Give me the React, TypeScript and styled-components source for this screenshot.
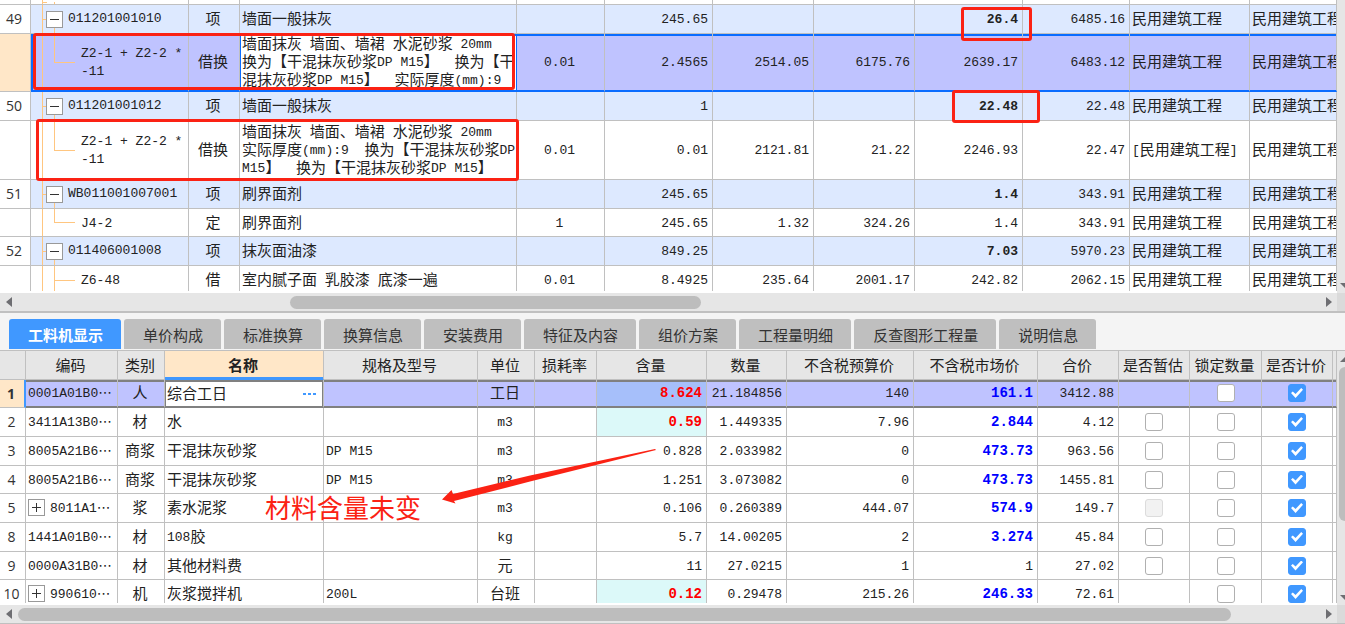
import React from 'react';
import styled, { createGlobalStyle, css } from 'styled-components';

const GlobalStyle = createGlobalStyle`
  *, *::before, *::after { box-sizing: border-box; }
  html, body { margin: 0; height: 100%; overflow: hidden; }
  body {
    background: #f4f4f4;
    color: #222;
    font-family: "Noto Sans CJK SC", sans-serif;
    font-size: 15px;
    font-weight: 400;
    text-spacing-trim: space-all;
  }
  #root { height: 100%; }
`;

const LINE = '#c0c0c0';
const BLUE = '#0a6cff';
const ACCENT = '#4098ff';
const SELECTED = '#bfc3ff';
const PEACH = '#ffe7c8';
const RED = '#fb2214';
const GUIDE = '#ffc680';

const Window = styled.main`
  position: relative;
  display: flex;
  flex-direction: column;
  height: 100vh;
  overflow: hidden;
`;

const Pane = styled.section<{ $grow?: boolean }>`
  display: grid;
  grid-template-columns: minmax(0, 1fr) 8px;
  grid-template-rows: minmax(0, 1fr) 18px;
  height: ${p => (p.$grow ? 'auto' : '311px')};
  flex: ${p => (p.$grow ? '1 1 0' : '0 0 auto')};
  min-height: 0;
  border-bottom: ${p => (p.$grow ? '1px' : '0')} solid ${LINE};
`;

const Viewport = styled.div`
  overflow: hidden;
  background: #fff;
  border-bottom: 2px solid #fff;
`;

const Splitter = styled.div`
  flex: 0 0 2px;
  background: ${LINE};
`;

const Grid = styled.table`
  width: 100%;
  table-layout: fixed;
  border-collapse: separate;
  border-spacing: 0;
`;

type Align = 'left' | 'center' | 'right';

const cellBase = css`
  padding: 0;
  border-right: 1px solid ${LINE};
  border-bottom: 1px solid ${LINE};
  white-space: pre;
  overflow: hidden;
  line-height: 18px;
  vertical-align: middle;
`;

const cellPadding: Record<Align, string> = {
  left: '0 0 2px 2px',
  center: '0 2px 2px 0',
  right: '0 4px 2px 0',
};

const Cell = styled.td<{ $align?: Align; $bg?: string }>`
  ${cellBase}
  text-align: ${p => p.$align ?? 'left'};
  padding: ${p => cellPadding[p.$align ?? 'left']};
  background: ${p => p.$bg ?? 'transparent'};
`;

const ControlCell = styled.td`
  ${cellBase}
`;

const RowHead = styled.th<{ $on?: boolean }>`
  ${cellBase}
  font-family: "Open Sans", "Noto Sans CJK SC", sans-serif;
  font-weight: ${p => (p.$on ? 700 : 400)};
  font-size: 14px;
  padding-right: 2px;
  color: #333;
  background: ${p => (p.$on ? PEACH : '#fff')};
`;

const Latin = styled.span<{ $strong?: boolean }>`
  font-family: "Liberation Mono", monospace;
  font-size: 13px;
  line-height: 10px;
  vertical-align: 1px;
  font-weight: ${p => (p.$strong ? 700 : 400)};
`;

const Bold = styled.span<{ $color: string }>`
  font-family: "Liberation Mono", monospace;
  font-size: 14px;
  line-height: 10px;
  vertical-align: 1px;
  font-weight: 700;
  color: ${p => p.$color};
`;

/* Latin runs use a half-width monospace face beside the full-width Chinese */
function Mixed({ text }: { text: string }) {
  return (
    <>
      {text.split(/([\x20-\x7e]+)/).filter(Boolean).map((run, i) =>
        /^[\x20-\x7e]/.test(run) ? <Latin key={i}>{run}</Latin> : <React.Fragment key={i}>{run}</React.Fragment>
      )}
    </>
  );
}

/* ---------- upper grid: bill items ---------- */

type Kind = 'item' | 'leaf' | 'branch';

const treeLines = {
  item: css`
    background-size: 1px 100%, 5px 1px, 1px 50%;
    background-position: 11px 0, 11px 50%, 23px 100%;
  `,
  leaf: css`
    background-size: 1px 100%, 21px 1px, 1px 50%;
    background-position: 11px 0, 23px 50%, 23px 0;
  `,
  branch: css`
    background-size: 1px 100%, 21px 1px, 1px 100%;
    background-position: 11px 0, 23px 50%, 23px 0;
  `,
};

const TreeCell = styled.td<{ $kind: Kind }>`
  ${cellBase}
  padding: ${p => (p.$kind === 'item' ? '0 0 0 15px' : '0 0 2px 50px')};
  background-image: linear-gradient(${GUIDE}, ${GUIDE}), linear-gradient(${GUIDE}, ${GUIDE}), linear-gradient(${GUIDE}, ${GUIDE});
  background-repeat: no-repeat;
  ${p => treeLines[p.$kind]}
`;

const TreeLabel = styled.div`
  display: flex;
  align-items: center;
  gap: 5px;
`;

const Toggle = styled.button`
  display: grid;
  place-items: center;
  flex: 0 0 17px;
  height: 17px;
  padding: 0;
  border: 1px solid #999;
  background: #fff;
  color: #333;
`;

const BillRow = styled.tr<{ $h: number; $kind: Kind; $on?: boolean }>`
  height: ${p => p.$h}px;
  background-color: ${p => (p.$on ? SELECTED : p.$kind === 'item' ? '#dde9ff' : '#fff')};
  ${p => p.$on && css`
    & > td {
      border-bottom: 2px solid ${BLUE};
      box-shadow: inset 0 2px 0 ${BLUE};
    }
    & > td:nth-child(2) { box-shadow: inset 2px 2px 0 ${BLUE}; }
    & > td:nth-child(4) {
      background: #fff;
      border-right-color: ${BLUE};
      box-shadow: inset 1px 2px 0 ${BLUE};
    }
  `}
`;

function ToggleIcon({ open }: { open: boolean }) {
  return (
    <svg width="11" height="11" viewBox="0 0 11 11" stroke="currentColor" fill="none" aria-hidden="true">
      <path d={open ? 'M1 5.5h9' : 'M1 5.5h9M5.5 1v9'} />
    </svg>
  );
}

interface Bill {
  no: string; kind: Kind; h: number; code: string; type: string; name: string;
  loss: string; qty: string; price: string; total: string; unit: string; sum: string; spec: string; on?: boolean;
}

const WORK = '民用建筑工程';

const bills: Bill[] = [
  { no: '49', kind: 'item', h: 29, code: '011201001010', type: '项', name: '墙面一般抹灰', loss: '', qty: '245.65', price: '', total: '', unit: '26.4', sum: '6485.16', spec: WORK },
  { no: '', kind: 'leaf', h: 58, code: 'Z2-1 + Z2-2 *\n-11', type: '借换', name: '墙面抹灰 墙面、墙裙 水泥砂浆 20mm\n换为【干混抹灰砂浆DP M15】  换为【干\n混抹灰砂浆DP M15】  实际厚度(mm):9', loss: '0.01', qty: '2.4565', price: '2514.05', total: '6175.76', unit: '2639.17', sum: '6483.12', spec: WORK, on: true },
  { no: '50', kind: 'item', h: 29, code: '011201001012', type: '项', name: '墙面一般抹灰', loss: '', qty: '1', price: '', total: '', unit: '22.48', sum: '22.48', spec: WORK },
  { no: '', kind: 'leaf', h: 59, code: 'Z2-1 + Z2-2 *\n-11', type: '借换', name: '墙面抹灰 墙面、墙裙 水泥砂浆 20mm\n实际厚度(mm):9  换为【干混抹灰砂浆DP\nM15】  换为【干混抹灰砂浆DP M15】', loss: '0.01', qty: '0.01', price: '2121.81', total: '21.22', unit: '2246.93', sum: '22.47', spec: `[${WORK}]` },
  { no: '51', kind: 'item', h: 29, code: 'WB011001007001', type: '项', name: '刷界面剂', loss: '', qty: '245.65', price: '', total: '', unit: '1.4', sum: '343.91', spec: WORK },
  { no: '', kind: 'leaf', h: 28, code: 'J4-2', type: '定', name: '刷界面剂', loss: '1', qty: '245.65', price: '1.32', total: '324.26', unit: '1.4', sum: '343.91', spec: WORK },
  { no: '52', kind: 'item', h: 29, code: '011406001008', type: '项', name: '抹灰面油漆', loss: '', qty: '849.25', price: '', total: '', unit: '7.03', sum: '5970.23', spec: WORK },
  { no: '', kind: 'branch', h: 29, code: 'Z6-48', type: '借', name: '室内腻子面 乳胶漆 底漆一遍', loss: '0.01', qty: '8.4925', price: '235.64', total: '2001.17', unit: '242.82', sum: '2062.15', spec: WORK },
];

const billCols = [31, 158, 51, 277, 88, 108, 101, 101, 108, 107, 120];

const BlankRow = styled.tr`
  height: 5px;
  & > * { padding-top: 0; padding-bottom: 0; }
`;

function BillGrid() {
  return (
    <Grid>
      <colgroup>
        {billCols.map((w, i) => <col key={i} style={{ width: w }} />)}
        <col />
      </colgroup>
      <tbody>
        <BlankRow>
          <RowHead />
          <TreeCell $kind="item" />
          {Array.from({ length: 10 }, (_, i) => <Cell key={i} />)}
        </BlankRow>
        {bills.map((b, i) => (
          <BillRow key={i} $h={b.h} $kind={b.kind} $on={b.on}>
            <RowHead scope="row" $on={b.on}>{b.no}</RowHead>
            <TreeCell $kind={b.kind}>
              {b.kind === 'item' ? (
                <TreeLabel>
                  <Toggle aria-label={`收起 ${b.code}`}><ToggleIcon open /></Toggle>
                  <Latin>{b.code}</Latin>
                </TreeLabel>
              ) : <Latin>{b.code}</Latin>}
            </TreeCell>
            <Cell $align="center">{b.type}</Cell>
            <Cell><Mixed text={b.name} /></Cell>
            <Cell $align="center"><Latin>{b.loss}</Latin></Cell>
            <Cell $align="right"><Latin>{b.qty}</Latin></Cell>
            <Cell $align="right"><Latin>{b.price}</Latin></Cell>
            <Cell $align="right"><Latin>{b.total}</Latin></Cell>
            <Cell $align="right"><Latin $strong={b.kind === 'item'}>{b.unit}</Latin></Cell>
            <Cell $align="right"><Latin>{b.sum}</Latin></Cell>
            <Cell><Mixed text={b.spec} /></Cell>
            <Cell>{WORK}</Cell>
          </BillRow>
        ))}
      </tbody>
    </Grid>
  );
}

/* ---------- tab strip ---------- */

const TabStrip = styled.div`
  display: flex;
  gap: 3px;
  flex: 0 0 38px;
  padding: 6px 9px 0;
  border-bottom: 1px solid ${LINE};
`;

const Tab = styled.button<{ $on?: boolean }>`
  height: 30px;
  padding: 0 18px 0 19px;
  border: 0;
  border-radius: 3px 3px 0 0;
  background: ${p => (p.$on ? ACCENT : '#bfbfbf')};
  color: ${p => (p.$on ? '#fff' : '#333')};
  font: ${p => (p.$on ? 700 : 400)} 15px "Noto Sans CJK SC", sans-serif;
  white-space: nowrap;
`;

const tabs = ['工料机显示', '单价构成', '标准换算', '换算信息', '安装费用', '特征及内容', '组价方案', '工程量明细', '反查图形工程量', '说明信息'];

/* ---------- lower grid: resources ---------- */

const HeadCell = styled.th<{ $on?: boolean }>`
  ${cellBase}
  height: 29px;
  padding-right: 2px;
  font-weight: ${p => (p.$on ? 700 : 400)};
  background: ${p => (p.$on ? PEACH : '#e6e6e6')};
  box-shadow: ${p => (p.$on ? `inset 0 -2px 0 ${ACCENT}` : 'none')};
  border-bottom-color: ${p => (p.$on ? ACCENT : LINE)};
`;

const ResRow = styled.tr<{ $on?: boolean }>`
  height: 29px;
  &:nth-child(3n + 1) { height: 28px; }
  background: ${p => (p.$on ? SELECTED : '#fff')};
  ${p => p.$on && css`
    & > td {
      border-bottom: 2px solid #808080;
      box-shadow: inset 0 2px 0 #808080;
    }
    & > th { border-right: 2px solid ${ACCENT}; }
  `}
`;

const Editor = styled.div`
  display: flex;
  align-items: center;
  height: 24px;
  margin-top: 2px;
  background: #fff;
  border: solid #808080;
  border-width: 0 1px;
`;

const NameInput = styled.input`
  flex: 1;
  min-width: 0;
  padding: 0 0 2px 1px;
  border: 0;
  outline: 0;
  background: transparent;
  color: inherit;
  font: inherit;
`;

const MoreButton = styled.button`
  display: grid;
  place-items: center;
  width: 24px;
  height: 20px;
  padding: 0;
  border: 0;
  background: none;
  color: ${ACCENT};
`;

const CodeCell = styled.div`
  display: flex;
  align-items: center;
  gap: 5px;
`;

const Code = styled.div`
  height: 18px;
`;

const Ellipsis = styled.span`
  font-family: "DejaVu Sans", sans-serif;
  font-size: 14px;
  line-height: 10px;
  vertical-align: 1px;
`;

const Check = styled.input`
  appearance: none;
  display: block;
  width: 18px;
  height: 18px;
  margin: 0 auto;
  border: 1px solid #b0b0b0;
  border-radius: 3px;
  background: #fff;
  &:disabled { background: #f2f2f2; border-color: #dcdcdc; }
  &:checked { background: ${ACCENT}; border-color: ${ACCENT}; }
  &:checked::before {
    content: "";
    display: block;
    width: 12px;
    height: 10px;
    margin: 3px 2px;
    background: #fff;
    clip-path: polygon(0 50%, 15% 34%, 38% 60%, 85% 0, 100% 18%, 38% 100%);
  }
`;

type Box = 'none' | 'off' | 'disabled';

interface Res {
  no: string; expand?: boolean; code: string; type: string; name: string; model: string; unit: string;
  content: string; changed?: boolean; qty: string; budget: string; market: string; hot?: boolean; sum: string; temp: Box;
}

const resources: Res[] = [
  { no: '1', code: '0001A01B0', type: '人', name: '综合工日', model: '', unit: '工日', content: '8.624', changed: true, qty: '21.184856', budget: '140', market: '161.1', hot: true, sum: '3412.88', temp: 'none' },
  { no: '2', code: '3411A13B0', type: '材', name: '水', model: '', unit: 'm3', content: '0.59', changed: true, qty: '1.449335', budget: '7.96', market: '2.844', hot: true, sum: '4.12', temp: 'off' },
  { no: '3', code: '8005A21B6', type: '商浆', name: '干混抹灰砂浆', model: 'DP M15', unit: 'm3', content: '0.828', qty: '2.033982', budget: '0', market: '473.73', hot: true, sum: '963.56', temp: 'off' },
  { no: '4', code: '8005A21B6', type: '商浆', name: '干混抹灰砂浆', model: 'DP M15', unit: 'm3', content: '1.251', qty: '3.073082', budget: '0', market: '473.73', hot: true, sum: '1455.81', temp: 'off' },
  { no: '5', expand: true, code: '8011A1', type: '浆', name: '素水泥浆', model: '', unit: 'm3', content: '0.106', qty: '0.260389', budget: '444.07', market: '574.9', hot: true, sum: '149.7', temp: 'disabled' },
  { no: '8', code: '1441A01B0', type: '材', name: '108胶', model: '', unit: 'kg', content: '5.7', qty: '14.00205', budget: '2', market: '3.274', hot: true, sum: '45.84', temp: 'off' },
  { no: '9', code: '0000A31B0', type: '材', name: '其他材料费', model: '', unit: '元', content: '11', qty: '27.0215', budget: '1', market: '1', sum: '27.02', temp: 'off' },
  { no: '10', expand: true, code: '990610', type: '机', name: '灰浆搅拌机', model: '200L', unit: '台班', content: '0.12', changed: true, qty: '0.29478', budget: '215.26', market: '246.33', hot: true, sum: '72.61', temp: 'none' },
];

const resCols = [26, 92, 47, 159, 154, 57, 62, 110, 80, 127, 124, 81, 71, 72, 71];
const resHeads = ['', '编码', '类别', '名称', '规格及型号', '单位', '损耗率', '含量', '数量', '不含税预算价', '不含税市场价', '合价', '是否暂估', '锁定数量', '是否计价', ''];

function Dots() {
  return (
    <svg width="14" height="3" viewBox="0 0 14 3" fill="currentColor" aria-hidden="true">
      <path d="M0 0h3v2H0zM5 0h3v2H5zM10 0h3v2h-3z" />
    </svg>
  );
}

function ResourceGrid() {
  return (
    <Grid>
      <colgroup>
        {resCols.map((w, i) => <col key={i} style={{ width: w }} />)}
        <col />
      </colgroup>
      <thead>
        <tr>{resHeads.map((h, i) => <HeadCell key={i} scope="col" $on={h === '名称'}>{h}</HeadCell>)}</tr>
      </thead>
      <tbody>
        {resources.map((r, i) => {
          const on = i === 0;
          return (
            <ResRow key={r.no} $on={on}>
              <RowHead scope="row" $on={on}>{r.no}</RowHead>
              <Cell>
                <CodeCell>
                  {r.expand && <Toggle aria-label={`展开 ${r.code}`}><ToggleIcon open={false} /></Toggle>}
                  <Code><Latin>{r.code}</Latin><Ellipsis>⋯</Ellipsis></Code>
                </CodeCell>
              </Cell>
              <Cell $align="center">{r.type}</Cell>
              {on ? (
                <ControlCell>
                  <Editor>
                    <NameInput aria-label="名称" defaultValue={r.name} />
                    <MoreButton aria-label="选择"><Dots /></MoreButton>
                  </Editor>
                </ControlCell>
              ) : <Cell><Mixed text={r.name} /></Cell>}
              <Cell><Mixed text={r.model} /></Cell>
              <Cell $align="center"><Mixed text={r.unit} /></Cell>
              <Cell />
              <Cell $align="right" $bg={r.changed ? (on ? '#a6bffa' : '#dcf9f9') : undefined}>
                {r.changed ? <Bold $color="#f00">{r.content}</Bold> : <Latin>{r.content}</Latin>}
              </Cell>
              <Cell $align="right"><Latin>{r.qty}</Latin></Cell>
              <Cell $align="right"><Latin>{r.budget}</Latin></Cell>
              <Cell $align="right">
                {r.hot ? <Bold $color="#00f">{r.market}</Bold> : <Latin>{r.market}</Latin>}
              </Cell>
              <Cell $align="right"><Latin>{r.sum}</Latin></Cell>
              <ControlCell>
                {r.temp !== 'none' && <Check type="checkbox" aria-label={`是否暂估 ${r.no}`} disabled={r.temp === 'disabled'} />}
              </ControlCell>
              <ControlCell><Check type="checkbox" aria-label={`锁定数量 ${r.no}`} /></ControlCell>
              <ControlCell><Check type="checkbox" aria-label={`是否计价 ${r.no}`} defaultChecked /></ControlCell>
              <Cell />
            </ResRow>
          );
        })}
      </tbody>
    </Grid>
  );
}

/* ---------- scroll bars ---------- */

const HTrack = styled.div`
  display: grid;
  align-items: center;
  grid-template-columns: 17px minmax(0, 1fr) 17px;
  justify-items: center;
  background: #e6e6e6;
  color: #6e6e72;
`;

const HRail = styled.div<{ $before: number; $size: number; $after: number }>`
  display: grid;
  grid-template-columns: ${p => `${p.$before}fr ${p.$size}fr ${p.$after}fr`};
  width: 100%;
`;

const HThumb = styled.div`
  grid-column: 2;
  height: 13px;
  border-radius: 7px;
  background: #bdbdbd;
`;

const VTrack = styled.div`
  display: flex;
  flex-direction: column;
  align-items: flex-end;
  overflow: hidden;
  background: #e6e6e6;
  color: #6e6e72;
`;

const VThumb = styled.div`
  width: 6px;
  height: 154px;
  border-radius: 6px 0 0 6px;
  background: #bdbdbd;
`;

const ArrowSlot = styled.div<{ $end?: boolean }>`
  display: flex;
  align-items: center;
  justify-content: flex-end;
  height: 16px;
  margin-top: ${p => (p.$end ? 'auto' : '0')};
`;

const Corner = styled.div`
  background: #dadada;
`;

function HBar({ before, size, after }: { before: number; size: number; after: number }) {
  return (
    <HTrack>
      <svg width="6" height="10" viewBox="0 0 6 10" fill="currentColor" aria-hidden="true"><path d="M6 0v10L0 5z" /></svg>
      <HRail $before={before} $size={size} $after={after}><HThumb /></HRail>
      <svg width="6" height="10" viewBox="0 0 6 10" fill="currentColor" aria-hidden="true"><path d="M0 0v10l6-5z" /></svg>
    </HTrack>
  );
}

const UpArrow = () => <svg width="5" height="5" viewBox="0 0 5 5" fill="currentColor" aria-hidden="true"><path d="M0 5l5-5v5z" /></svg>;
const DownArrow = () => <svg width="5" height="5" viewBox="0 0 5 5" fill="currentColor" aria-hidden="true"><path d="M0 0h5v5z" /></svg>;

/* ---------- review marks drawn over the window ---------- */

const Mark = styled.div<{ $x: number; $y: number; $w: number; $h: number }>`
  position: absolute;
  left: ${p => p.$x}px;
  top: ${p => p.$y}px;
  width: ${p => p.$w}px;
  height: ${p => p.$h}px;
  border: 3px solid ${RED};
  border-radius: 3px;
  pointer-events: none;
`;

const Note = styled.p`
  position: absolute;
  left: 265px;
  top: 489px;
  margin: 0;
  color: ${RED};
  font-size: 26px;
  line-height: 36px;
  white-space: nowrap;
  pointer-events: none;
`;

const NoteArrow = styled.svg`
  position: absolute;
  left: 440px;
  top: 445px;
  pointer-events: none;
`;

export default function App() {
  return (
    <Window>
      <GlobalStyle />
      <Pane>
        <Viewport><BillGrid /></Viewport>
        <VTrack><ArrowSlot $end><DownArrow /></ArrowSlot></VTrack>
        <HBar before={273} size={411} after={619} />
        <Corner />
      </Pane>
      <Splitter />
      <TabStrip role="tablist">
        {tabs.map((t, i) => <Tab key={t} role="tab" aria-selected={i === 0} $on={i === 0}>{t}</Tab>)}
      </TabStrip>
      <Pane $grow>
        <Viewport><ResourceGrid /></Viewport>
        <VTrack>
          <ArrowSlot><UpArrow /></ArrowSlot>
          <VThumb />
          <ArrowSlot $end><DownArrow /></ArrowSlot>
        </VTrack>
        <HBar before={1} size={1213} after={89} />
        <Corner />
      </Pane>
      <Mark $x={33} $y={33} $w={482} $h={57} />
      <Mark $x={36} $y={119} $w={483} $h={62} />
      <Mark $x={961} $y={7} $w={71} $h={34} />
      <Mark $x={952} $y={90} $w={88} $h={33} />
      <Note>材料含量未变</Note>
      <NoteArrow width="218" height="60" viewBox="0 0 218 60" fill={RED} aria-hidden="true">
        <path d="M2 54.5L11.5 45l1.500 4L90 30.500 215 4l1 1L90 36.500 14 56l1.500 2.500z" />
      </NoteArrow>
    </Window>
  );
}
